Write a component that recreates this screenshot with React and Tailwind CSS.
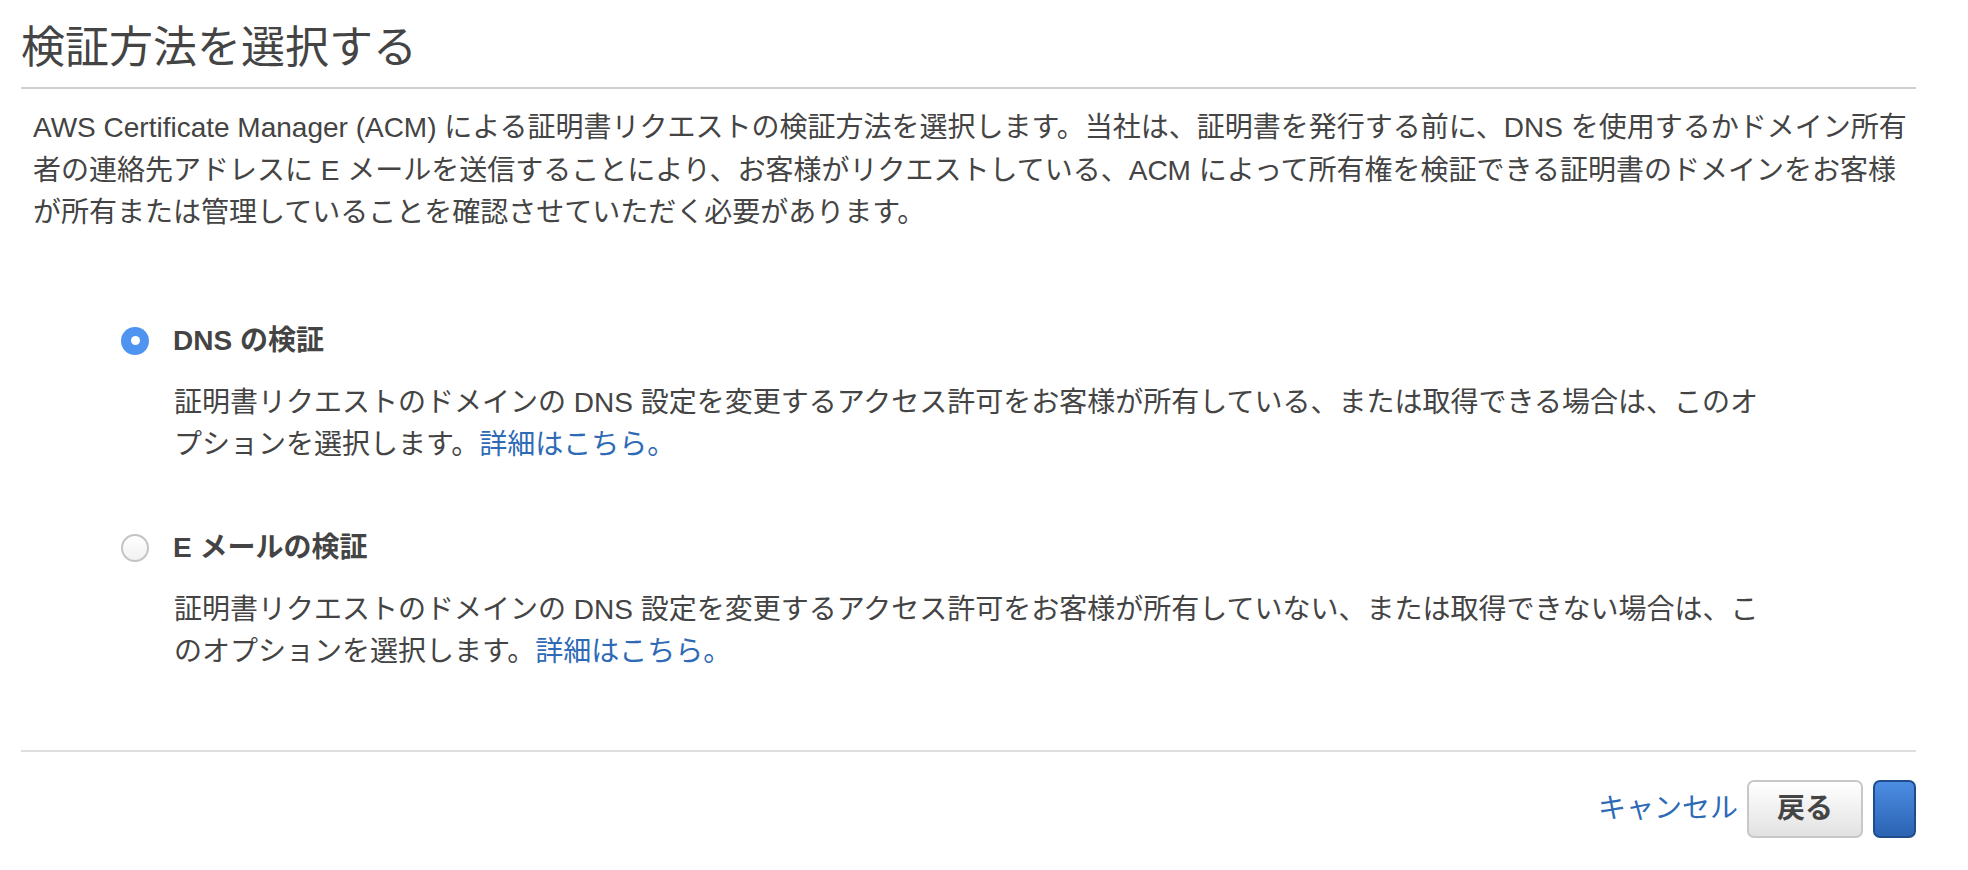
const Radio = ({ checked }) =>
  checked ? (
    <span className="flex h-[28px] w-[28px] shrink-0 items-center justify-center rounded-full bg-[#4f94f0]">
      <span className="h-[9px] w-[9px] rounded-full bg-white" />
    </span>
  ) : (
    <span className="h-[28px] w-[28px] shrink-0 rounded-full border-2 border-[#c4c4c4] bg-linear-to-b from-white to-[#f1f1f1]" />
  );

const Option = ({ checked, title, lines, className }) => (
  <div className={className}>
    <div className="flex items-center">
      <div className="flex w-[152px] justify-end pr-[24px]">
        <Radio checked={checked} />
      </div>
      <span className="text-[28px] font-bold leading-[42px]">{title}</span>
    </div>
    <p className="mt-[20px] pl-[153px] text-[28px] leading-[42px] whitespace-nowrap">
      {lines[0]}
      <br />
      {lines[1]}
      <a href="#" className="text-[#2e6ab6]">
        詳細はこちら。
      </a>
    </p>
  </div>
);

const App = () => {
  return (
    <div className="min-h-screen w-full bg-white pl-[21px] pr-[52px] font-['Liberation_Sans','Noto_Sans_CJK_JP',sans-serif] text-[#444]">
      <h1 className="border-b-2 border-[#cfcfcf] pt-[22px] pb-[13px] text-[44px] font-normal leading-[52px]">
        検証方法を選択する
      </h1>
      <p className="mt-[18px] px-[12px] text-[28px] leading-[42.5px] whitespace-nowrap">
        AWS Certificate Manager (ACM) による証明書リクエストの検証方法を選択します。当社は、証明書を発行する前に、DNS を使用するかドメイン所有
        <br />
        者の連絡先アドレスに E メールを送信することにより、お客様がリクエストしている、ACM によって所有権を検証できる証明書のドメインをお客様
        <br />
        が所有または管理していることを確認させていただく必要があります。
      </p>

      <Option
        className="mt-[85px]"
        checked
        title="DNS の検証"
        lines={[
          "証明書リクエストのドメインの DNS 設定を変更するアクセス許可をお客様が所有している、または取得できる場合は、このオ",
          "プションを選択します。",
        ]}
      />
      <Option
        className="mt-[61px]"
        title="E メールの検証"
        lines={[
          "証明書リクエストのドメインの DNS 設定を変更するアクセス許可をお客様が所有していない、または取得できない場合は、こ",
          "のオプションを選択します。",
        ]}
      />

      <div className="mt-[77px] border-t-2 border-[#dedede] pt-[28px]">
        <div className="flex items-center justify-end gap-[10px]">
          <a href="#" className="mr-[-1px] text-[28px] leading-[42px] text-[#2e6ab6]">
            キャンセル
          </a>
          <button className="h-[58px] w-[116px] rounded-[7px] border-2 border-[#c8c8c8] bg-linear-to-b from-white to-[#e2e2e2] text-[28px] font-bold text-[#444]">
            戻る
          </button>
          <button className="h-[58px] w-[43px] rounded-[7px] border-2 border-[#1f4d8c] bg-linear-to-b from-[#4c8de3] to-[#2c63b3]" />
        </div>
      </div>
    </div>
  );
};

export default App;
